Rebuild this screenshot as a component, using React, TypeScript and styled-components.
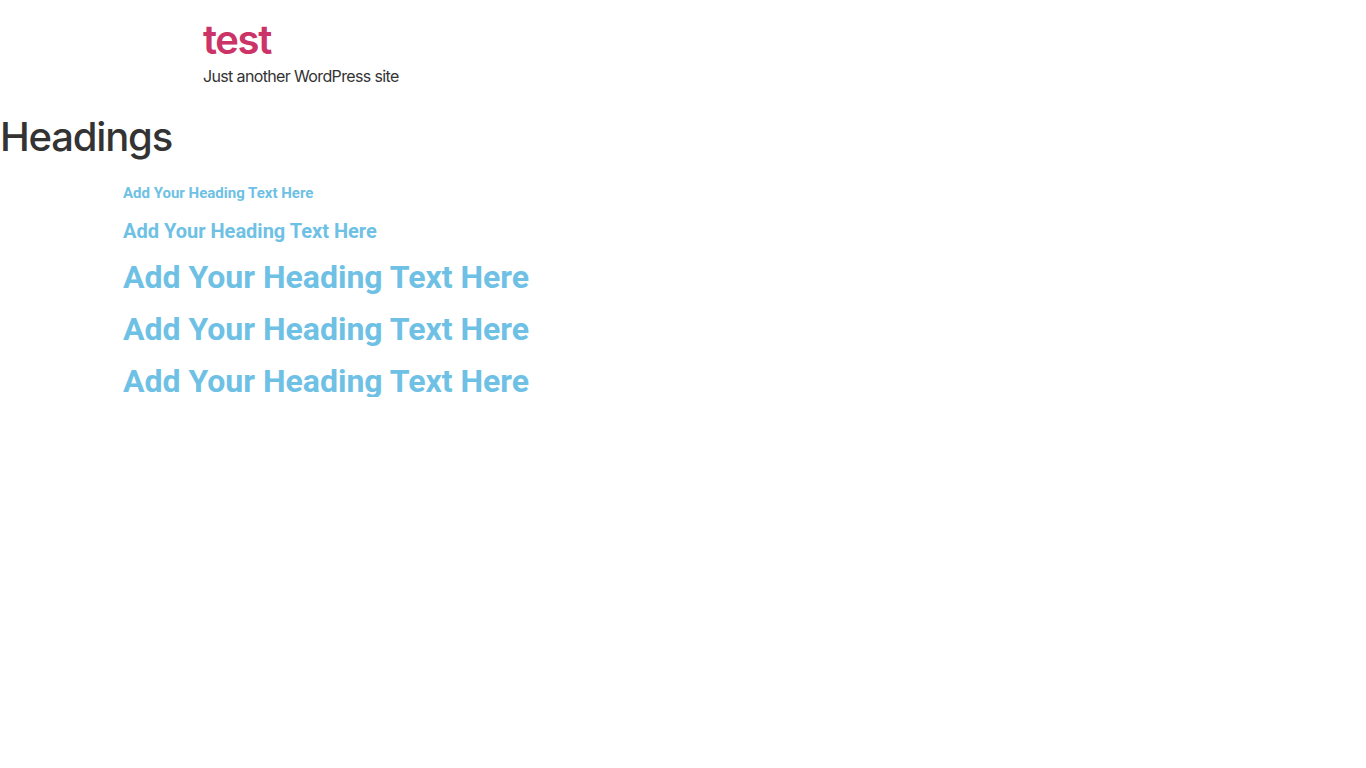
import React from "react";
import styled, { createGlobalStyle } from "styled-components";

const Global = createGlobalStyle`
  *, *::before, *::after { box-sizing: border-box; }
  html, body { margin: 0; padding: 0; background: #fff; }
  body {
    font-family: Inter, "Noto Sans", "Liberation Sans", sans-serif;
    font-size: 16px;
    line-height: 1.5;
    color: #333;
  }
`;

const Header = styled.header`
  max-width: 960px;
  margin: 0 auto;
  padding: 16px 0;
  display: flex;
  flex-direction: column;
`;

const SiteTitle = styled.h1`
  margin: 0;
  font-size: 40px;
  line-height: 1.2;
  font-weight: 600;
  letter-spacing: -0.035em;
  a {
    color: #cc3366;
    text-decoration: none;
  }
`;

const Tagline = styled.p`
  margin: 0;
  font-size: 16px;
  line-height: 1.5;
  letter-spacing: -0.04em;
  color: #333;
`;

const PageTitle = styled.h1`
  margin: 9px 0 24px;
  font-size: 40px;
  line-height: 1.2;
  font-weight: 450;
  letter-spacing: -0.03em;
  color: #333;
`;

const Container = styled.div`
  max-width: 1140px;
  margin: 0 auto;
  display: flex;
  flex-direction: column;
  gap: 20px;
  padding: 0 10px;
`;

const Heading = styled.h2<{ $size: number; $lh?: number }>`
  margin: 0;
  font-family: Roboto, "Liberation Sans", sans-serif;
  font-weight: 700;
  font-size: ${(p) => p.$size}px;
  line-height: ${(p) => p.$lh ?? p.$size}px;
  color: #6ec1e4;
`;

const items = [
  { size: 15, lh: 16 },
  { size: 20 },
  { size: 32 },
  { size: 32 },
  { size: 32 },
];

export default function App() {
  return (
    <>
      <Global />
      <Header>
        <SiteTitle>
          <a href="#">test</a>
        </SiteTitle>
        <Tagline>Just another WordPress site</Tagline>
      </Header>
      <main>
        <PageTitle>Headings</PageTitle>
        <Container>
          {items.map((it, i) => (
            <Heading key={i} $size={it.size} $lh={it.lh}>
              Add Your Heading Text Here
            </Heading>
          ))}
        </Container>
      </main>
    </>
  );
}
